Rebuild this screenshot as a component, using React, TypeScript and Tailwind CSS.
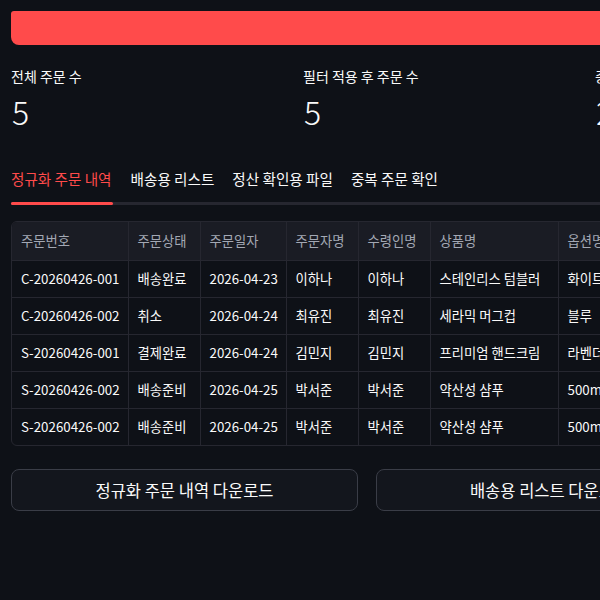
const font = { fontFamily: '"Noto Sans CJK KR", "Noto Sans", sans-serif' };

const columns = [
  { label: "주문번호", w: 116 },
  { label: "주문상태", w: 72 },
  { label: "주문일자", w: 86 },
  { label: "주문자명", w: 72 },
  { label: "수령인명", w: 72 },
  { label: "상품명", w: 128 },
  { label: "옵션명", w: 110 },
  { label: "수량", w: 70 },
];

const rows = [
  ["C-20260426-001", "배송완료", "2026-04-23", "이하나", "이하나", "스테인리스 텀블러", "화이트", "1"],
  ["C-20260426-002", "취소", "2026-04-24", "최유진", "최유진", "세라믹 머그컵", "블루", "2"],
  ["S-20260426-001", "결제완료", "2026-04-24", "김민지", "김민지", "프리미엄 핸드크림", "라벤더", "1"],
  ["S-20260426-002", "배송준비", "2026-04-25", "박서준", "박서준", "약산성 샴푸", "500ml", "1"],
  ["S-20260426-002", "배송준비", "2026-04-25", "박서준", "박서준", "약산성 샴푸", "500ml", "1"],
];

const tabs = ["정규화 주문 내역", "배송용 리스트", "정산 확인용 파일", "중복 주문 확인"];

const metrics = [
  { label: "전체 주문 수", value: "5" },
  { label: "필터 적용 후 주문 수", value: "5" },
  { label: "중복 의심 주문 수", value: "2" },
];

const tableWidth = columns.reduce((s, c) => s + c.w, 0);

export default function App() {
  return (
    <div className="w-[600px] h-[600px] overflow-hidden bg-[#0e1117] text-[#fafafa]" style={font}>
      <div className="w-[900px] pl-[11px] pt-[11px]">
        <div className="h-[34px] bg-[#ff4b4b] rounded-tl-[3px] rounded-bl-lg" />

        <div className="flex mt-[21px]">
          {metrics.map((m) => (
            <div key={m.label} className="w-[292px] shrink-0">
              <div className="text-[14px] leading-[20px] text-[#fafafa]">{m.label}</div>
              <div className="text-[32px] leading-[40px] mt-[5px] pl-[1px] font-light">{m.value}</div>
            </div>
          ))}
        </div>

        <div className="mt-[38px]">
          <div className="flex gap-[18px]">
            {tabs.map((t, i) => (
              <div
                key={t}
                className={`text-[14.6px] leading-[20px] pb-[13px] ${i === 0 ? "text-[#ff4b4b] pr-[1px]" : "text-[#fafafa]"}`}
              >
                {t}
              </div>
            ))}
          </div>
          <div className="flex h-[3px] bg-[#262730]">
            <div className="w-[102px] bg-[#ff4b4b] rounded-full" />
          </div>
        </div>

        <div className="mt-[16px] w-fit rounded-md border border-[#262730] overflow-hidden">
          <table className="table-fixed border-collapse text-[13.3px]" style={{ width: tableWidth }}>
            <colgroup>
              {columns.map((c) => (
                <col key={c.label} style={{ width: c.w }} />
              ))}
            </colgroup>
            <thead>
              <tr className="bg-[#1a1c24] h-[38px]">
                {columns.map((c, i) => (
                  <th
                    key={c.label}
                    className={`text-left font-normal text-[#a3a8b4] px-[9px] border-b border-[#262730] ${i < columns.length - 1 ? "border-r" : ""}`}
                  >
                    {c.label}
                  </th>
                ))}
              </tr>
            </thead>
            <tbody>
              {rows.map((r, ri) => (
                <tr key={ri} className="h-[37px]">
                  {r.map((cell, ci) => (
                    <td
                      key={ci}
                      className={`px-[9px] whitespace-nowrap overflow-hidden border-[#262730] ${ri < rows.length - 1 ? "border-b" : ""} ${ci < r.length - 1 ? "border-r" : ""}`}
                    >
                      {cell}
                    </td>
                  ))}
                </tr>
              ))}
            </tbody>
          </table>
        </div>

        <div className="flex gap-[18px] mt-[23px]">
          <button className="w-[347px] h-[42px] rounded-lg border border-[#3a3d47] bg-[#13161d] text-[16.5px] text-[#fafafa]">
            정규화 주문 내역 다운로드
          </button>
          <button className="w-[347px] h-[42px] rounded-lg border border-[#3a3d47] bg-[#13161d] text-[16.5px] text-[#fafafa]">
            배송용 리스트 다운로드
          </button>
        </div>
      </div>
    </div>
  );
}
